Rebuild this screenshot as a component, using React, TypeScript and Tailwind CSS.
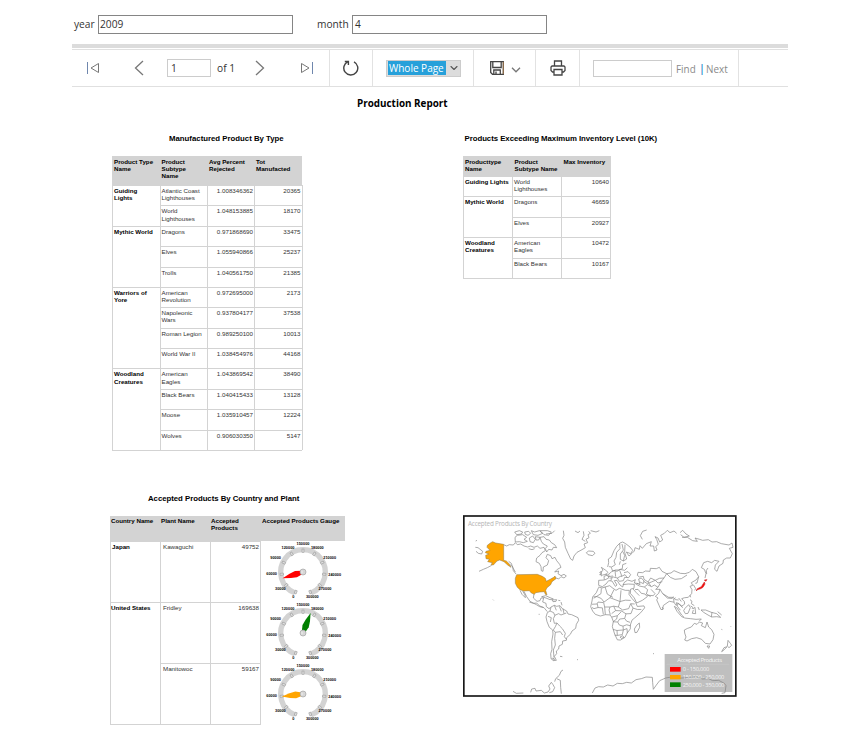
import React from "react";
import { ChevronDown } from "lucide-react";

type Item = { name: string; values: string[] };
type Group = { name: string; items: Item[] };

const manufactured: Group[] = [
  {
    name: "Guiding Lights",
    items: [
      { name: "Atlantic Coast Lighthouses", values: ["1.008346362", "20365"] },
      { name: "World Lighthouses", values: ["1.048153885", "18170"] },
    ],
  },
  {
    name: "Mythic World",
    items: [
      { name: "Dragons", values: ["0.971868690", "33475"] },
      { name: "Elves", values: ["1.055940866", "25237"] },
      { name: "Trolls", values: ["1.040561750", "21385"] },
    ],
  },
  {
    name: "Warriors of Yore",
    items: [
      { name: "American Revolution", values: ["0.972695000", "2173"] },
      { name: "Napoleonic Wars", values: ["0.937804177", "37538"] },
      { name: "Roman Legion", values: ["0.989250100", "10013"] },
      { name: "World War II", values: ["1.038454976", "44168"] },
    ],
  },
  {
    name: "Woodland Creatures",
    items: [
      { name: "American Eagles", values: ["1.043869542", "38490"] },
      { name: "Black Bears", values: ["1.040415433", "13128"] },
      { name: "Moose", values: ["1.035910457", "12224"] },
      { name: "Wolves", values: ["0.906030350", "5147"] },
    ],
  },
];

const exceeding: Group[] = [
  { name: "Guiding Lights", items: [{ name: "World Lighthouses", values: ["10640"] }] },
  {
    name: "Mythic World",
    items: [
      { name: "Dragons", values: ["46659"] },
      { name: "Elves", values: ["20927"] },
    ],
  },
  {
    name: "Woodland Creatures",
    items: [
      { name: "American Eagles", values: ["10472"] },
      { name: "Black Bears", values: ["10167"] },
    ],
  },
];

const line = "border-[#d3d3d3]";

function Body({ groups, first, second, value, row }: { groups: Group[]; first: string; second: string; value: string; row: string }) {
  return (
    <div className={`border-b border-l ${line}`}>
      {groups.map((g) => (
        <div key={g.name} className="flex">
          <div className={`${first} shrink-0 border-t border-r ${line} pt-px pl-px font-bold text-black`}>{g.name}</div>
          <div>
            {g.items.map((it) => (
              <div key={it.name} className={`flex ${row}`}>
                <div className={`${second} border-t border-r ${line} pt-px pr-0.5 pl-px`}>{it.name}</div>
                {it.values.map((v) => (
                  <div key={v} className={`${value} border-t border-r ${line} pt-px pr-px text-right`}>{v}</div>
                ))}
              </div>
            ))}
          </div>
        </div>
      ))}
    </div>
  );
}

const gaugeLabels: [string, number, number][] = [
  ["0", -29, 74],
  ["30000", -68, 49],
  ["60000", -94, 6],
  ["90000", -82, -42],
  ["120000", -45, -73],
  ["150000", 0, -84],
  ["180000", 43, -73],
  ["210000", 80, -42],
  ["240000", 95, 7],
  ["270000", 66, 49],
  ["300000", 28, 74],
];

function Gauge({ value, color }: { value: number; color: string }) {
  const angle = 200 + (value / 300000) * 320;
  return (
    <svg className="block h-[61px] w-[84px]" viewBox="-126 -93 252 183">
      <path d="M-24.2 62.6A67 67 0 1 1 24.2 62.6" fill="none" stroke="#d3d3d3" strokeWidth="16" />
      {gaugeLabels.map(([t], i) => (
        <g key={t} transform={`rotate(${200 + i * 32})`}>
          <rect x="-3" y="-69" width="6" height="10" fill="#dedede" stroke="#8f8f8f" strokeWidth="1.5" />
        </g>
      ))}
      <path d="M-5 -3L-10 -22L-7 -40L0 -64L7 -40L10 -22L5 -3Z" fill={color} transform={`rotate(${angle})`} />
      <circle r="9" fill="#d6d6d6" stroke="#a0a0a0" strokeWidth="2" />
      <path d="M-3 -4L-3 4" stroke="#fff" strokeWidth="2" />
      {gaugeLabels.map(([t, x, y]) => (
        <text key={t} x={x} y={y + 4} textAnchor="middle" fontSize="11.5" fontWeight="bold" fontFamily="Liberation Sans, sans-serif" fill="#000">
          {t}
        </text>
      ))}
    </svg>
  );
}

// Moves every point below latitude line 250 proportionally upward.
const compress = (d: string, factor: number) =>
  d.replace(/(\d+) (\d+)/g, (_, x, y) => `${x} ${+y > 250 ? (250 + (+y - 250) * factor).toFixed(1) : y}`);

const northern = [
  // North America
  "M131 104L140 108L148 104L160 105L166 98L172 104L182 102L192 108L203 111L212 108L222 112L232 108L240 115L252 112L256 122L246 128L240 136L230 144L228 155L238 160L243 170L244 182L249 184L250 171L262 165L266 152L258 143L262 133L272 137L276 146L285 142L290 152L299 163L303 172L292 178L284 186L296 183L294 191L303 197L312 193L319 198L312 204L303 200L296 207L286 203",
  "M150 164L158 170L160 182L168 192M146 154L154 160L158 172L166 186",
  "M165 82L172 76L188 74L200 82L192 88L202 94L190 98L178 95L166 96ZM164 66L178 62L188 66L184 72L170 74ZM194 66L206 64L212 70L204 76L196 73ZM208 84L218 78L226 88L220 98L210 95ZM214 62L224 66L238 62L248 70L234 76L220 74ZM226 80L240 82L236 90L228 90Z",
  "M240 82L252 80L258 88L268 90L274 98L284 104L290 113L280 112L276 120L266 118L260 126L256 116L262 108L250 102L244 94ZM240 62L262 62L274 66L266 76L252 74ZM206 116L216 119L224 116M258 72L276 70L284 62",
  "M310 62L312 76L308 85L314 96L316 112L324 130L332 147L338 151L342 138L351 127L366 119L376 113L372 102L383 98L378 88L387 83L384 74L391 70L386 64M345 63L354 68L360 63M370 64L372 76L366 88L376 94",
  "M379 128L386 123L400 124L405 130L397 137L384 134ZM392 62L408 66L418 62",
  "M47 93L51 91M46 112L54 113L68 124L65 132L55 130L48 124M57 184L70 178L82 173L95 166M99 269L101 271",
  // Mexico, Central America, Caribbean
  "M180 241L186 253L196 263L195 255L188 243M192 244L200 260L210 274L229 284L239 290L252 293L262 305M222 252L220 264L231 274L240 272L243 264L251 264L248 276L258 280L259 290L267 296L272 292",
  "M245 260L257 257L270 263L280 267L270 269L258 264ZM276 270L290 269L288 274L279 275ZM295 271L301 272M303 276L306 286",
  // Europe
  "M443 171L446 158L445 147L454 141L462 122L470 109L480 99L488 96L497 101L510 111L518 121L512 131L499 126L507 138L516 130L523 123L525 113L538 118L540 107L547 115L559 101",
  "M479 101L480 116L470 127L468 142L462 153L466 164L455 171L447 170M486 102L490 120L481 132L481 148L490 153L494 136L488 124M490 153L500 147L494 127L495 104M478 164L481 154M454 172L458 184L466 180L476 180L487 176L488 164L499 160",
  "M424 198L422 188L429 181L424 172L436 180L444 187L438 193L428 195ZM418 188L424 184L424 193L418 194",
  "M416 211L433 210L432 199L443 195L455 185L462 181L471 184L480 178L494 181L502 173M416 211L416 226L427 230L438 222L446 212L456 213L466 229L471 225L463 212L471 211L480 225L488 231L492 218L503 210L516 214L526 209L523 219L536 221",
  "M434 210L446 204L447 194M449 205L460 201L472 204L485 197L479 181M465 182L467 200M472 204L478 214L490 212L494 202L506 203L512 194L504 185L492 188M456 204L452 212M483 200L495 194L502 203M438 191L444 200L459 198",
  // Middle East
  "M488 224L505 222L523 223L522 235L512 237L511 250L523 264L530 279L547 271L562 260L555 252L544 250L534 238L525 239M519 237L528 247L538 257M526 221L538 228L553 231L563 239L559 252L572 260M540 216L550 221L552 213L544 204L536 207L540 224L531 220M553 231L562 224L575 230L583 225L594 232",
  // Northern Russia and Central Asia
  "M547 88L541 77L548 64L560 60M559 101L574 95L570 108L581 108L583 123L591 120L587 110L595 103L590 88L585 80L594 84L599 96L608 90L602 76L613 70L622 61L630 68L642 63L650 70M660 68L668 61L678 72L688 78L672 82L662 74M666 82L682 82L698 92L712 94L705 84L719 88L728 91L745 89L756 96L770 95L784 101L807 105L816 99L819 112L808 115L817 131L811 144L800 144L790 150L789 160L777 168L771 184L764 178L766 165L777 154L764 151L755 158L743 154L731 158L724 173L733 178L738 191L735 204",
  "M532 196L534 187L548 188L556 183L570 184L571 175L589 176L598 172L606 184L620 191L612 204L598 205L586 211L572 204L564 216L552 208L550 199L538 201ZM620 191L633 189L642 182L661 190L675 191L688 187L697 178L708 185L716 200L708 210L694 218M620 191L631 202L645 208L664 206L681 195M551 214L562 221L574 216L586 211L594 219L607 215M564 216L573 229M612 204L603 215L594 232L587 238L600 238L608 251L626 262L639 262L646 269L656 270",
];

const africa = [
  "M416 231L426 234L449 227L459 235L468 241L478 235L496 241L508 241L507 254L516 269L527 284L532 298L552 296L554 303L542 321L524 340L516 348L511 366L511 380L501 396L495 411L481 421L472 420L464 399L457 372L460 353L455 337L450 329L436 328L421 333L406 327L398 315L392 299L396 278L398 263L409 248L416 232",
  "M400 263L411 262L424 269L432 282L450 266L462 239M424 235L423 251L401 268M435 230L442 253L459 265M450 266L480 280L483 241M480 280L496 275L512 276M480 280L475 300L488 311L506 306L512 288L524 289M396 290L411 289L414 282L431 284L434 300L450 300L461 297L475 300M412 289L414 302L402 306L396 302M414 302L427 303L430 327M434 300L436 328M450 300L447 311L451 328M461 297L467 313L455 324M467 313L484 314L498 325L513 324L519 304L532 309L544 309M512 288L519 304M455 337L472 332L484 317M472 332L470 344L459 354L473 355L479 344L494 342L498 325M473 355L478 366L489 370L490 384L471 386L459 382M494 342L500 352L510 356M489 370L500 365L512 369M490 384L501 379L502 396M471 386L472 404L487 401L490 384M472 404L464 403M480 410L488 405L492 411L484 415Z",
];

const southAsia = [
  "M694 218L698 226L690 229L696 239L695 251L685 267L673 269L665 273L673 285L674 296L664 306L657 294L649 290L653 307L661 322M716 200L711 219L706 220M700 224L707 236L704 241M744 174L739 181L740 192M573 238L585 251L580 260L561 258M600 238L596 250L586 263L594 270L590 278L597 301L603 320L608 318L610 302L628 284L642 288L648 302L654 294",
  "M608 251L622 270L636 272L642 264M642 288L641 274L647 269M656 270L664 285M690 258L692 267M690 277L696 284L694 294L703 303M692 304L699 311L696 317M654 294L662 300L668 312",
];

const southern = [
  // South America
  "M208 306L220 310L230 309L239 318L250 322",
  "M262 338L270 333L273 321L283 316L290 319L300 317L307 326L320 333L324 342L335 344L354 353L356 361L349 373L347 385L336 393L331 403L320 413L319 421L308 423L307 433L297 438L296 447L289 453L290 461L283 469L289 481L279 482L273 475L272 461L276 448L275 425L279 402L278 390L268 382L261 365L258 351Z",
  "M270 333L281 338L284 346L296 341L303 345L319 339M285 346L280 356L283 370L291 369L299 378L307 386L316 400L313 410L319 418M280 390L286 397L301 395L308 405M286 397L284 415L286 435L280 450L282 473M298 319L304 334M309 326L312 341M283 316L289 331M291 369L286 380L280 390M264 349L274 353L271 366M274 476L284 478L278 474",
  "M300 469L307 470M351 479L354 479M236 343L239 343",
  "M538 369L539 382L531 397L525 398L523 387L530 376Z",
  // Indonesia and the Pacific
  "M643 319L651 324L665 345L673 353L665 350L651 334ZM675 325L686 314L691 323L684 340L676 341L671 332ZM699 327L705 322L707 341L697 340L700 330M714 321L718 330M723 330L737 330L754 337L770 341L782 352L770 350L755 351L744 345L731 337ZM674 354L691 356L708 358L724 357L717 364M756 336L754 351M773 335L785 345M784 388L787 389M812 379L814 381M579 461L582 461",
  "M606 321L610 326L607 330",
  // Oceania
  "M674 399L673 390L683 385L694 381L703 370L711 373L718 366L728 369L724 377L736 383L741 366L746 381L755 389L762 403L759 419L750 432L736 430L725 418L710 413L695 416L681 423L674 420L678 411ZM741 438L749 438L746 445ZM804 421L811 430L815 436L807 443L802 438ZM801 440L793 449L785 455L792 443Z",
  // Antarctica
  "M159 574L169 580L190 579M212 577L215 567L225 565L228 573L244 571L253 579L264 576L270 567L266 558L274 547L279 554L284 563L278 575L268 578M284 545L287 536L298 526L303 514L309 510M290 536L301 541L302 562L304 581M397 579L405 564L416 560L430 561L443 555L459 558L472 550L487 551L500 547L514 549L528 539L544 536L558 531L577 532L578 548L580 568L589 555L599 542L617 534L634 531L653 535L680 533L709 530L727 537L746 536L758 542L776 541L793 550L798 557L795 578L785 580",
];

const mainland = [...northern, ...africa.map((d) => compress(d, 0.82)), ...southAsia.map((d) => compress(d, 0.7))];

function WorldMap() {
  return (
    <svg className="block h-[182px] w-[274px]" viewBox="9 15 822 546">
      <rect x="11.5" y="18" width="816" height="540" fill="#fff" stroke="#181818" strokeWidth="5" />
      <text x="24" y="47" fontSize="19" textLength="252" fontFamily="Open Sans, sans-serif" fill="#b4b4b4">Accepted Products By Country</text>
      <g fill="none" stroke="#868686" strokeWidth="2.1" strokeLinejoin="round">
        {mainland.map((d) => (
          <path key={d} d={d} />
        ))}
      </g>
      <g fill="#ffa500" stroke="#8a7a50" strokeWidth="1.5">
        <path d="M82 106L91 99L98 95L107 99L131 103L131 151L139 153L147 161L153 172L143 165L132 155L119 150L111 153L100 165L93 164L97 158L83 155L88 148L78 146L77 136L87 132L76 128L78 124L90 121L81 112Z" />
        <path d="M170 194L232 193L247 199L256 205L259 214L272 207L281 202L285 198L288 206L276 215L272 224L261 233L257 241L261 255L256 253L253 245L240 246L227 248L223 253L214 249L208 242L191 243L180 239L172 232L166 220L166 205Z" />
      </g>
      <path d="M733 210L741 209L737 214ZM733 216L735 222L729 232L722 236L712 239L709 243L711 237L724 230Z" fill="#ff0000" stroke="#c33" strokeWidth="2" />
      <g transform="translate(0 -30)">
        <g fill="none" stroke="#868686" strokeWidth="2.1" strokeLinejoin="round">
          {southern.map((d) => (
            <path key={d} d={d} />
          ))}
        </g>
        <rect x="614" y="462" width="203" height="114" fill="#808080" fillOpacity="0.5" />
        <g fontFamily="Open Sans, sans-serif" fill="#fff" fillOpacity="0.85">
          <text x="652" y="485" fontSize="18" textLength="134">Accepted Products</text>
          <text x="668" y="514" fontSize="17" textLength="80">0 - 150,000</text>
          <text x="668" y="538" fontSize="17" textLength="125">150,000 - 250,000</text>
          <text x="668" y="560" fontSize="17" textLength="125">250,000 - 350,000</text>
        </g>
        <path d="M620 493H808" stroke="#ccc" strokeWidth="1.5" />
        <rect x="630" y="501" width="32" height="14" fill="#ff0000" />
        <rect x="630" y="525" width="32" height="13" fill="#ffa500" />
        <rect x="630" y="547" width="32" height="14" fill="#008000" />
      </g>
    </svg>
  );
}

const sep = "h-full border-r border-[#e2e2e2]";

export default function App() {
  return (
    <div className="h-[737px] w-[858px] overflow-hidden bg-white font-['Open_Sans',sans-serif] text-[#333]">
      <div className="flex h-11 items-center pt-1 pl-[74px] text-[10.2px]">
        <span className="w-6 pt-0.5">year</span>
        <div className="flex h-[19px] w-[195px] items-center border border-[#858585] pt-0.5 pl-px">2009</div>
        <span className="ml-6 w-[35px] pt-0.5">month</span>
        <div className="flex h-[19px] w-[195px] items-center border border-[#858585] pt-0.5 pl-0.5">4</div>
      </div>
      <div className="ml-[72px] w-[716px]">
        <div className="h-1 bg-[#dcdcdc]" />
        <div className="mt-px flex h-[38px] items-center border-t border-b border-[#e0e0e0] text-[10.2px]">
          <div className={`${sep} flex w-[258px] items-center`}>
            <svg className="ml-[14px] h-3 w-[14px] shrink-0" viewBox="0 0 14 12" fill="none" strokeWidth="1">
              <path d="M1.5 0V12" stroke="#6f87ad" /><path d="M12.5 1.5V10.5L5 6Z" stroke="#777" />
            </svg>
            <svg className="ml-[34px] h-4 w-[10px] shrink-0" viewBox="0 0 10 16" fill="none" stroke="#777" strokeWidth="1.3"><path d="M9 1L1.5 8L9 15" /></svg>
            <div className="ml-[23px] flex h-[18px] w-[44px] shrink-0 items-center border border-[#ccc] pt-0.5 pl-[3px]">1</div>
            <span className="ml-[6px] w-[22px] shrink-0 pt-0.5 whitespace-nowrap">of 1</span>
            <svg className="ml-[16px] h-4 w-[10px] shrink-0" viewBox="0 0 10 16" fill="none" stroke="#777" strokeWidth="1.3"><path d="M1 1L8.5 8L1 15" /></svg>
            <svg className="ml-[35px] h-3 w-[14px] shrink-0" viewBox="0 0 14 12" fill="none" strokeWidth="1">
              <path d="M12.5 0V12" stroke="#6f87ad" /><path d="M1.5 1.5V10.5L9 6Z" stroke="#777" />
            </svg>
          </div>
          <div className={`${sep} flex w-[43px] items-center justify-center`}>
            <svg className="h-4 w-4" viewBox="0 0 16 16" fill="none" stroke="#444" strokeWidth="1.4">
              <path d="M11 1.8A7 7 0 1 1 5 1.6" /><path d="M1.8 1.5H5.4V5" />
            </svg>
          </div>
          <div className={`${sep} flex w-[101px] items-center pl-[13px]`}>
            <div className="flex h-[17px] w-[75px] items-center border border-[#ccc] bg-[#dcdcdc]">
              <span className="ml-px flex h-[14px] w-[58px] items-center bg-[#26a0da] pt-px pl-px text-[10px] whitespace-nowrap text-white">Whole Page</span>
              <ChevronDown className="ml-0.5 h-3 w-3" strokeWidth={2.2} color="#555" />
            </div>
          </div>
          <div className={`${sep} flex w-[62px] items-center pl-4`}>
            <svg className="h-[14px] w-[14px]" viewBox="0 0 14 14" fill="none" stroke="#444" strokeWidth="1.3">
              <path d="M.7 .7H13.3V13.3H2.5L.7 11.5ZM2.8 1V6.5H11.2V1M3.8 13V9H10.3V13M6 10.5V13" />
              <path d="M13.3 1V13" stroke="#b98149" strokeWidth=".7" />
            </svg>
            <svg className="mt-1 ml-[7px] h-[6px] w-[10px]" viewBox="0 0 10 6" fill="none" stroke="#777" strokeWidth="1.3"><path d="M1 .8L5 4.8L9 .8" /></svg>
          </div>
          <div className={`${sep} flex w-[44px] items-center justify-center`}>
            <svg className="h-4 w-4" viewBox="0 0 16 16" fill="none" stroke="#444" strokeWidth="1.3">
              <path d="M4.5 6V1H11.5V6M4 12H2.5L1 10.5V7L2 6H14L15 7V10.5L13.5 12H12M4 9.5H12V15H4Z" />
            </svg>
          </div>
          <div className={`${sep} flex w-[159px] items-center pl-[13px] text-[9.9px] text-[#8a8a8a]`}>
            <div className="h-[17px] w-[79px] shrink-0 border border-[#ccc]" />
            <span className="ml-1 w-[22px] pt-0.5">Find</span>
            <span className="w-[8px] text-center font-semibold text-[#1580c4]">|</span>
            <span className="pt-0.5">Next</span>
          </div>
        </div>
      </div>

      <div className="mt-2 pl-[357px] text-[9.9px] leading-4 font-bold text-black">Production Report</div>

      <div className="flex h-[361px] pt-[23px] font-['Liberation_Sans',sans-serif] text-[6.2px] leading-[7.2px]">
        <div className="ml-28 w-[190px]">
          <div className="pl-[57px] text-[7.8px] leading-[10px] font-bold whitespace-nowrap text-black">Manufactured Product By Type</div>
          <div className="mt-3 flex h-[29px] bg-[#d3d3d3] pt-0.5 font-bold text-black">
            <div className="w-12 pl-0.5 whitespace-nowrap">Product Type<br />Name</div>
            <div className="w-12 pl-[1.5px]">Product<br />Subtype<br />Name</div>
            <div className="w-[47px] pl-px whitespace-nowrap">Avg Percent<br />Rejected</div>
            <div className="w-[47px] pl-px">Tot<br />Manufacted</div>
          </div>
          <Body groups={manufactured} first="w-[47.5px] pr-[3px]" second="w-[47px]" value="w-[47.5px]" row="h-[20.38px]" />
        </div>
        <div className="ml-[161px] w-[148px]">
          <div className="pl-[1.5px] text-[7.8px] leading-[10px] font-bold tracking-[-0.03px] whitespace-nowrap text-black">Products Exceeding Maximum Inventory Level (10K)</div>
          <div className="mt-3 flex h-5 bg-[#d3d3d3] pt-0.5 font-bold text-black">
            <div className="w-[50px] pl-0.5">Producttype<br />Name</div>
            <div className="w-[49px] pl-[1.5px] whitespace-nowrap">Product<br />Subtype Name</div>
            <div className="w-[49px] pl-[1.5px] whitespace-nowrap">Max Inventory</div>
          </div>
          <Body groups={exceeding} first="w-[49px]" second="w-[49px]" value="w-[49px]" row="h-[20.4px]" />
        </div>
      </div>

      <div className="flex pt-[22px] font-['Liberation_Sans',sans-serif] text-[6.2px] leading-[7.2px]">
        <div className="ml-[110px] w-[235px]">
          <div className="pl-[38px] text-[7.8px] leading-[10px] font-bold tracking-[-0.03px] whitespace-nowrap text-black">Accepted Products By Country and Plant</div>
          <div className="mt-3 flex h-[25px] bg-[#d3d3d3] pt-px font-bold whitespace-nowrap text-black">
            <div className="w-[50px] pl-px">Country Name</div>
            <div className="w-[50px] pl-px">Plant Name</div>
            <div className="w-[50px] pl-px">Accepted<br />Products</div>
            <div className="w-[85px] pl-0.5">Accepted Products Gauge</div>
          </div>
          <div className="flex">
            <div className={`w-[151px] border-b border-l ${line}`}>
              <div className="flex h-[61px]">
                <div className={`w-[50px] border-t border-r ${line} pt-px pl-px font-bold text-black`}>Japan</div>
                <div className={`w-[50px] border-t border-r ${line} pt-px pl-0.5`}>Kawaguchi</div>
                <div className={`w-[50px] border-t border-r ${line} pt-px pr-px text-right`}>49752</div>
              </div>
              <div className="flex h-[122px]">
                <div className={`w-[50px] border-t border-r ${line} pt-px font-bold whitespace-nowrap text-black`}>United States</div>
                <div className="w-[100px]">
                  {[["Fridley", "169638"], ["Manitowoc", "59167"]].map(([n, v]) => (
                    <div key={n} className="flex h-[61px]">
                      <div className={`w-[50px] border-t border-r ${line} pt-px pl-0.5`}>{n}</div>
                      <div className={`w-[50px] border-t border-r ${line} pt-px pr-px text-right`}>{v}</div>
                    </div>
                  ))}
                </div>
              </div>
            </div>
            <div>
              <Gauge value={49752} color="#ff0000" />
              <Gauge value={169638} color="#008000" />
              <Gauge value={59167} color="#ffa500" />
            </div>
          </div>
        </div>
        <div className="mt-[21px] ml-[118px]">
          <WorldMap />
        </div>
      </div>
    </div>
  );
}
